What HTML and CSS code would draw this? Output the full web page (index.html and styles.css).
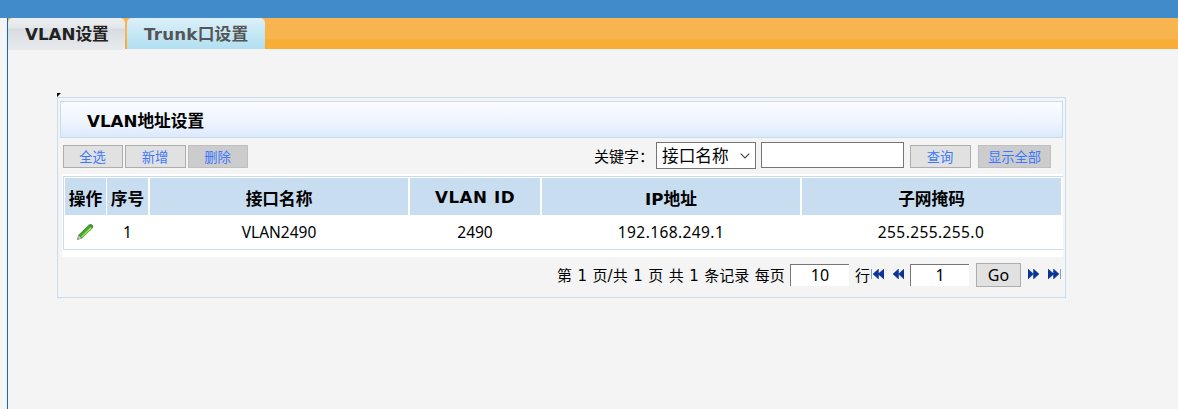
FILE: index.html
```html
<!DOCTYPE html>
<html lang="zh-CN">
<head>
    <meta charset="UTF-8">
    <title>VLAN设置</title>
    <link rel="stylesheet" href="styles.css">
</head>
<body>

<div class="topbar"></div>
<div class="page">
    <div class="tabs">
        <div class="tab active">VLAN设置</div>
        <div class="tab">Trunk口设置</div>
    </div>

    <div class="panel">
        <i class="corner"></i>
        <div class="panel-title">VLAN地址设置</div>

        <div class="toolbar">
            <button class="btn">全选</button>
            <button class="btn add">新增</button>
            <button class="btn dark">删除</button>
            <label class="keyword">关键字：</label>
            <div class="select">
                <span>接口名称</span>
                <svg width="10" height="6" viewBox="0 0 10 6"><path d="M0.7 0.7L5 5L9.3 0.7" fill="none" stroke="#444" stroke-width="1.1"/></svg>
            </div>
            <input class="search" type="text">
            <button class="btn query">查询</button>
            <button class="btn dark all">显示全部</button>
        </div>

        <div class="list">
            <div class="grid">
                <div class="th narrow">操作</div>
                <div class="th">序号</div>
                <div class="th">接口名称</div>
                <div class="th latin">VLAN ID</div>
                <div class="th">IP地址</div>
                <div class="th last-col">子网掩码</div>
                <div class="td">
                    <svg class="pencil" width="18" height="18" viewBox="0 0 18 18">
                        <path d="M1 17L2.4 12L13 1.6Q14.6 0.3 16.3 1.8Q18 3.4 16.8 5L6.2 15.3Z" fill="#4b8a48"/>
                        <path d="M3.4 12.4L13.3 2.7L14.8 4L5 13.8Z" fill="#35b526"/>
                        <path d="M5 13.7L14.6 4.1L15.8 5.2L6.1 14.6Z" fill="#a5e04c"/>
                        <path d="M1 17L2.4 12.2L6 15.3Z" fill="#8fa58a"/>
                        <path d="M2.6 13.2L5 15.2L3 15.6Z" fill="#dfe6d2"/>
                    </svg>
                </div>
                <div class="td">1</div>
                <div class="td">VLAN2490</div>
                <div class="td">2490</div>
                <div class="td addr">192.168.249.1</div>
                <div class="td addr">255.255.255.0</div>
            </div>
        </div>

        <div class="pager">
            <span class="summary">第 1 页/共 1 页 共 1 条记录 每页</span>
            <input class="num" type="text" value="10">
            <span class="rows">行</span>
            <svg class="first" width="13" height="10" viewBox="0 0 13 10"><path d="M0 0H1V10H0Z" fill="#7f9bd0"/><path d="M7.5 0V10L2 5ZM13 0V10L7 5Z" fill="#0a3596" stroke="#0a3596" stroke-width=".5"/></svg>
            <svg class="prev" width="11" height="10" viewBox="0 0 11 10"><path d="M5.5 0V10L0 5ZM11 0V10L5.5 5Z" fill="#0a3596" stroke="#0a3596" stroke-width=".5"/></svg>
            <input class="num page-no" type="text" value="1">
            <button class="go">Go</button>
            <svg class="next" width="11" height="10" viewBox="0 0 11 10"><path d="M0 0V10L5.5 5ZM5.5 0V10L11 5Z" fill="#0a3596" stroke="#0a3596" stroke-width=".5"/></svg>
            <svg class="last" width="13" height="10" viewBox="0 0 13 10"><path d="M12 0H13V10H12Z" fill="#7f9bd0"/><path d="M0 0V10L6 5ZM5.5 0V10L11 5Z" fill="#0a3596" stroke="#0a3596" stroke-width=".5"/></svg>
        </div>
    </div>
</div>

</body>
</html>
```

FILE: styles.css
```css
* {
    box-sizing: border-box;
}

body {
    margin: 0;
    background: #f4f4f4;
    color: #000;
    font-family: "DejaVu Sans", "Noto Sans CJK SC", sans-serif;
    font-size: 16px;
    overflow: hidden;
}

.topbar {
    height: 18px;
    background: #428bca;
}

.page {
    height: 391px;
    margin-left: 7px;
    border-left: 1px solid #0f69c9;
}

.tabs {
    display: flex;
    gap: 2px;
    height: 31px;
    background: linear-gradient(#f8b54f 0, #f8b54f 20px, #f8ae36 22px, #f8ae36);
}

.tab {
    width: 138px;
    height: 31px;
    padding-left: 17px;
    border-radius: 5px 5px 0 0;
    background: linear-gradient(#dbf0f8, #b1dff2);
    color: #555;
    font-size: 16.7px;
    font-weight: bold;
    letter-spacing: 0.2px;
    line-height: 32px;
    white-space: nowrap;
}

.tab.active {
    width: 117px;
    height: 32px;
    background: linear-gradient(#eceff1 0, #e4e7ea 10px, #d7dce1 11px, #e8ebed);
    color: #222;
    letter-spacing: 0;
}

.panel {
    position: relative;
    width: 1009px;
    height: 201px;
    margin: 48px 0 0 49px;
    padding: 3px 2px 0;
    border: 1px solid #c8dcf0;
}

.corner {
    position: absolute;
    left: -1px;
    top: -5px;
    border-top: 4px solid #000;
    border-right: 4px solid transparent;
}

.panel-title {
    height: 37px;
    padding-left: 26px;
    border: 1px solid #c8dcf0;
    background: linear-gradient(#fafcff, #eef4fe 60%, #dbe9fb);
    font-size: 16.7px;
    font-weight: bold;
    line-height: 39px;
}

.toolbar {
    display: flex;
    align-items: flex-start;
    height: 36px;
    padding: 4px 0 0 3px;
}

.btn {
    width: 60px;
    height: 23px;
    margin: 3px 2px 0 0;
    padding: 0 1px 0 0;
    border: 1px solid #adadad;
    background: #e1e1e1;
    color: #3c78ff;
    font: 13.3px/21px "Noto Sans CJK SC", sans-serif;
}

.btn.add {
    width: 61px;
}

.btn.dark {
    border-color: #bfbfbf;
    background: #ccc;
}

.btn.query {
    width: 61px;
    margin: 3px 7px 0 6px;
}

.btn.all {
    width: 73px;
    padding: 0;
}

.keyword {
    width: 62px;
    margin-left: 344px;
    font: 15px/28px "Noto Sans CJK SC", sans-serif;
    white-space: nowrap;
}

.select {
    display: flex;
    align-items: center;
    justify-content: space-between;
    width: 100px;
    height: 27px;
    margin-right: 5px;
    padding: 0 5px;
    border: 1px solid #767676;
    background: #fff;
    font: 16.7px/25px "Noto Sans CJK SC", sans-serif;
}

.search {
    width: 143px;
    height: 26px;
    border: 1px solid #767676;
    background: #fff;
}

.list {
    width: 1001px;
    height: 83px;
    margin-left: 2px;
    padding: 2px 0 0 1px;
    background: #fff;
}

.grid {
    display: grid;
    grid-template-columns: 42px 43px 260px 132px 260px 260px;
    grid-template-rows: 37px 34px;
    height: 74px;
    padding: 1px 0 0 1px;
    border: 1px solid #c8dcf0;
    border-right: 0;
}

.th, .td {
    display: flex;
    align-items: center;
    justify-content: center;
    border-right: 2px solid #fff;
    white-space: nowrap;
}

.th {
    padding-top: 2px;
    background: #c8ddf0;
    font-size: 16.7px;
    font-weight: bold;
}

.th.narrow {
    border-right-width: 1px;
}

.th.last-col {
    border-right-width: 1px;
}

.th.latin {
    padding-top: 0;
    letter-spacing: 0.55px;
}

.td {
    font-family: "Noto Sans", sans-serif;
    font-size: 15.5px;
    padding-bottom: 1px;
}

.td.addr {
    letter-spacing: 0.4px;
}

.pager {
    display: flex;
    align-items: flex-start;
    padding: 5px 0 0 497px;
    font-size: 15px;
}

.summary {
    width: 233px;
    margin-top: 3px;
    line-height: 23px;
    white-space: nowrap;
    word-spacing: 0.75px;
}

.num {
    width: 59px;
    height: 22px;
    margin: 2px 1px 0 0;
    padding: 0 0 1px;
    border: 0 solid #767676;
    border-width: 1px 0 0 1px;
    background: #fff;
    font: 16px "Noto Sans", sans-serif;
    text-align: center;
}

.rows {
    width: 16px;
    margin: 3px 0 0 5px;
    line-height: 23px;
}

.pager svg {
    margin-top: 7px;
}

.pager .prev {
    margin: 7px 6px 0 9px;
}

.go {
    width: 45px;
    height: 24px;
    margin: 1px 7px 0 6px;
    padding: 0;
    border: 1px solid #adadad;
    background: #e1e1e1;
    font: 16px/22px "Noto Sans", sans-serif;
}

.pager .last {
    margin-left: 9px;
}
```
